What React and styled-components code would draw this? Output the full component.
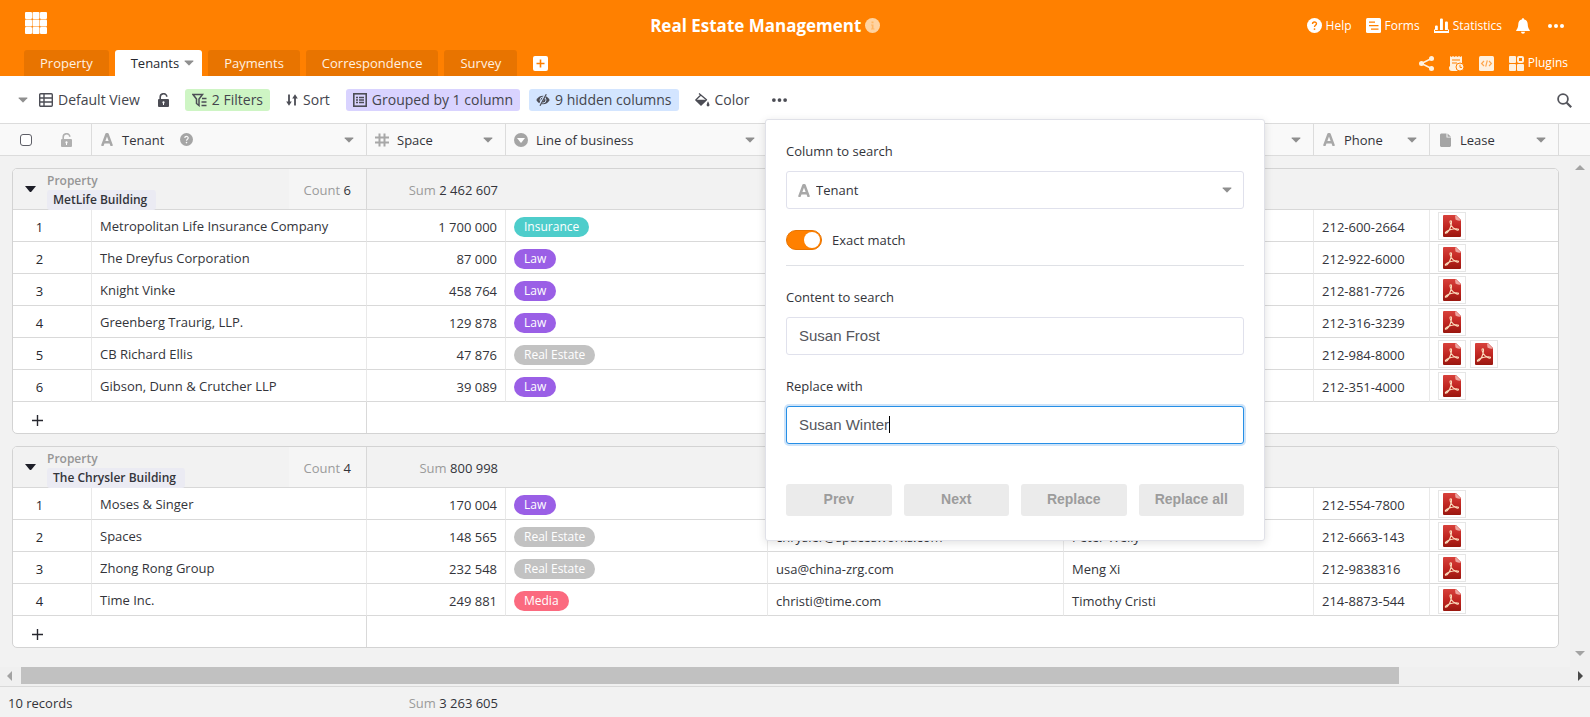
import React from "react";
import styled, { createGlobalStyle, css } from "styled-components";

const GlobalStyle = createGlobalStyle`
  *, *::before, *::after { box-sizing: border-box; }
  body {
    margin: 0;
    background: #f2f2f2;
    color: #33343a;
    font-family: "Open Sans", "Noto Sans", sans-serif;
    font-size: 13px;
    line-height: 20px;
  }
  button, select { font: inherit; color: inherit; }
  svg { display: block; flex: none; }
`;

/* ---------- icons ---------- */

const AppsIcon = () => (
  <svg width="22" height="22" viewBox="0 0 22 22" fill="#fff">
    {[0, 1, 2].map((r) =>
      [0, 1, 2].map((c) => (
        <rect key={`${r}${c}`} x={c * 7.5} y={r * 7.5} width="7" height="7" rx="1" />
      ))
    )}
  </svg>
);

const Caret = ({ color = "#8f8f8f", w = 10, h = 6 }) => (
  <svg width={w} height={h} viewBox="0 0 10 6" fill={color}>
    <path d="M0.9 0.5H9.1Q9.700 0.7 9.3 1.2L5.4 5.2Q5 5.600 4.600 5.2L0.700 1.200Q0.300 0.700 0.900 0.500Z" />
  </svg>
);

const HelpIcon = ({ size = 15, fill = "#fff", mark = "#ff8000" }) => (
  <svg width={size} height={size} viewBox="0 0 16 16">
    <circle cx="8" cy="8" r="8" fill={fill} />
    <path d="M5.900 6.300C5.900 3.500 10.200 3.600 10.100 6.200C10.100 7.700 8 7.700 8 9.500" fill="none" stroke={mark} strokeWidth="1.500" />
    <circle cx="8" cy="11.800" r="1" fill={mark} />
  </svg>
);

const InfoIcon = () => (
  <svg width="15" height="15" viewBox="0 0 15 15">
    <circle cx="7.500" cy="7.500" r="7.500" fill="#ffd3a1" />
    <path d="M6.500 3.500h2v1.700h-2zM6 6.500h2.500v4h1v1H6v-1h.8v-3H6z" fill="#ffb766" />
  </svg>
);

const FormsIcon = () => (
  <svg width="15" height="15" viewBox="0 0 15 15">
    <rect width="15" height="15" rx="1.500" fill="#fff" />
    <path d="M3 4.200h6M3 7.600h9.500M5 11.200h7.500" stroke="#ff8000" strokeWidth="1.300" />
  </svg>
);

const StatsIcon = () => (
  <svg width="15" height="15" viewBox="0 0 15 15" fill="#fff">
    <path d="M0 13h15v2H0zM1 8.500a1 1 0 0 1 1-1h.8a1 1 0 0 1 1 1V12H1zM6 1.500a1 1 0 0 1 1-1h.9a1 1 0 0 1 1 1V12H6zM11 4.500a1 1 0 0 1 1-1h.9a1 1 0 0 1 1 1V12H11z" />
    <path d="M0 11.500H1V13H0zM14 11.500H15V13H14z" />
  </svg>
);

const BellIcon = () => (
  <svg width="14" height="16" viewBox="0 0 14 16" fill="#fff">
    <path d="M7 0.300C7.700 0.300 8.200 0.800 8.200 1.500C10.500 2 11.600 3.800 11.700 6C11.800 9 12.400 10.400 13.800 12.200V13H0.200V12.200C1.600 10.400 2.200 9 2.300 6C2.400 3.800 3.500 2 5.800 1.500C5.800 0.800 6.300 0.300 7 0.300ZM5 13.700H9C8.900 15 8.100 15.700 7 15.700C5.900 15.700 5.100 15 5 13.700Z" />
  </svg>
);

const DotsIcon = ({ color, w = 16 }) => (
  <svg width={w} height="4" viewBox="0 0 16 4" fill={color}>
    <circle cx="2" cy="2" r="2" /><circle cx="8" cy="2" r="2" /><circle cx="14" cy="2" r="2" />
  </svg>
);

const ShareIcon = () => (
  <svg width="15" height="15" viewBox="0 0 15 15" fill="#fff1e0">
    <path d="M2.500 7.500L12.500 2.500M2.500 7.500L12.500 12.500" stroke="#fff1e0" strokeWidth="1.400" />
    <circle cx="2.500" cy="7.500" r="2.500" /><circle cx="12.500" cy="2.500" r="2.500" /><circle cx="12.500" cy="12.500" r="2.500" />
  </svg>
);

const ReportIcon = () => (
  <svg width="15" height="15" viewBox="0 0 15 15">
    <path d="M1 0L2.500 1L4 0L5.500 1L7 0L8.500 1L10 0L11.500 1L13 0V15H3Q0 15 0 12V10.500H1Z" fill="#fff1e0" />
    <path d="M3 4h8M3 7h5" stroke="#ff8000" strokeWidth="1.100" />
    <circle cx="11" cy="11" r="4" fill="#fff1e0" stroke="#ff8000" strokeWidth="1" />
    <path d="M11 8.800V11.400H13" fill="none" stroke="#ff8000" strokeWidth="1" />
  </svg>
);

const CodeIcon = () => (
  <svg width="15" height="15" viewBox="0 0 15 15">
    <rect width="15" height="15" rx="1.500" fill="#fff1e0" />
    <path d="M5 5L2.600 7.500L5 10M10 5L12.400 7.500L10 10M8.300 4.300L6.700 10.700" fill="none" stroke="#ffa64d" strokeWidth="1.200" />
  </svg>
);

const PluginsIcon = () => (
  <svg width="15" height="15" viewBox="0 0 15 15" fill="#fff1e0">
    <rect width="7" height="7" rx="1" /><rect y="8" width="7" height="7" rx="1" /><rect x="8" y="8" width="7" height="7" rx="1" />
    <rect x="9" y="1" width="5" height="5" rx="1" fill="none" stroke="#fff1e0" strokeWidth="2" />
  </svg>
);

const PlusBox = () => (
  <svg width="15" height="15" viewBox="0 0 15 15">
    <rect width="15" height="15" rx="2" fill="#fff" />
    <path d="M7.500 3.500V11.500M3.500 7.500H11.500" stroke="#ff8000" strokeWidth="1.600" />
  </svg>
);

const TableIcon = () => (
  <svg width="14" height="14" viewBox="0 0 14 14" fill="none" stroke="#4c4d55" strokeWidth="1.400">
    <rect x="0.700" y="0.700" width="12.600" height="12.600" rx="1" />
    <path d="M5 1V13M1 5H13M1 9H13" />
  </svg>
);

const LockIcon = ({ color = "#4c4d55" }) => (
  <svg width="11" height="14" viewBox="0 0 11 14">
    <rect x="0" y="6" width="11" height="8" rx="1" fill={color} />
    <path d="M2.200 6.500V4C2.200 -0.300 8.800 -0.300 8.800 3.800" fill="none" stroke={color} strokeWidth="1.600" />
    <circle cx="5.500" cy="9.400" r="1.100" fill="#fff" /><path d="M5.500 9.500V12" stroke="#fff" strokeWidth="1" />
  </svg>
);

const FilterIcon = () => (
  <svg width="15" height="14" viewBox="0 0 15 14" fill="none" stroke="#4c4d55" strokeWidth="1.500">
    <path d="M1 1.500H10.500L7 6V12.500L4.500 10.500V6Z" />
    <path d="M10 5.500H14.500M9.500 9H14.500M9.500 12.500H14.500" />
  </svg>
);

const SortIcon = () => (
  <svg width="12" height="12" viewBox="0 0 12 12" fill="#4c4d55">
    <path d="M2.100 0.500H3.900V7.500H5.800L3 11.700L0.200 7.500H2.100ZM8.100 11.500V4.500H6.200L9 0.300L11.800 4.500H9.900V11.500Z" />
  </svg>
);

const GroupIcon = () => (
  <svg width="14" height="14" viewBox="0 0 14 14" fill="none" stroke="#4c4d55" strokeWidth="1.600">
    <rect x="0.800" y="0.800" width="12.400" height="12.400" />
    <path d="M3 4.500H5M6 4.500H11M3 7H5M6 7H11M3 9.500H5M6 9.500H11" strokeWidth="1.400" />
  </svg>
);

const HiddenIcon = () => (
  <svg width="14" height="12" viewBox="0 0 14 12">
    <path d="M0.300 6C3 0.300 11 0.300 13.700 6C11 11.700 3 11.700 0.300 6Z" fill="#4c4d55" />
    <circle cx="7" cy="6" r="3" fill="none" stroke="#d3e5ff" strokeWidth="0.900" />
    <path d="M10 0L3 12" stroke="#d3e5ff" strokeWidth="2.400" />
    <path d="M10.300 0.200L4 11.800" stroke="#4c4d55" strokeWidth="1.200" />
  </svg>
);

const ColorIcon = () => (
  <svg width="15" height="14" viewBox="0 0 15 14">
    <path d="M4 0.500L11.500 6.700L6 12L0.800 7L5.600 2.200" fill="none" stroke="#4c4d55" strokeWidth="1.300" strokeLinejoin="round" />
    <path d="M1 6.800H11.600L6 12.400Z" fill="#4c4d55" />
    <path d="M13 8.300Q16 13.300 13 13.400Q10.200 13.300 13 8.300Z" fill="#4c4d55" />
  </svg>
);

const SearchIcon = () => (
  <svg width="15" height="15" viewBox="0 0 15 15" fill="none" stroke="#54555c">
    <circle cx="6" cy="6" r="4.900" strokeWidth="1.800" />
    <path d="M9.700 9.700L14.200 14.200" strokeWidth="2.200" />
  </svg>
);

const TextTypeIcon = () => (
  <svg width="12" height="13" viewBox="0 0 12 13" fill="none" stroke="#a8a8a8" strokeWidth="2.500" strokeLinejoin="round">
    <path d="M1.200 13L5.500 1.300H6.500L10.800 13M3 9.200H9" />
  </svg>
);

const NumberTypeIcon = () => (
  <svg width="14" height="14" viewBox="0 0 14 14" fill="none" stroke="#a8a8a8" strokeWidth="2">
    <path d="M4.500 0.500V13.500M9.500 0.500V13.500M0 4.500H14M0 9.500H14" />
  </svg>
);

const SelectTypeIcon = () => (
  <svg width="14" height="14" viewBox="0 0 14 14">
    <circle cx="7" cy="7" r="7" fill="#a5a5a5" />
    <path d="M3 5H11L7 10Z" fill="#fff" />
  </svg>
);

const FileTypeIcon = () => (
  <svg width="11" height="14" viewBox="0 0 11 14" fill="#a5a5a5">
    <path d="M1 0.500H6.500V4.500H11V13L10 14H1L0 13V1.500ZM7.500 0.500L11 3.800H7.500Z" />
  </svg>
);

const PdfIcon = () => (
  <svg width="18" height="22" viewBox="0 0 18 22">
    <defs>
      <linearGradient id="pdfRed" x1="0" y1="0" x2="0" y2="1">
        <stop offset="0" stopColor="#d8413b" />
        <stop offset="0.550" stopColor="#bf2520" />
        <stop offset="1" stopColor="#99170f" />
      </linearGradient>
    </defs>
    <path d="M1 0H13L18 5V21Q18 22 17 22H1Q0 22 0 21V1Q0 0 1 0Z" fill="url(#pdfRed)" />
    <path d="M12 0.500H13L18 5.500Q14 6 12.500 4.500Z" fill="#eea6a0" />
    <path d="M7.300 6C9 5 8.600 8 8 10.500C7 14.500 4.500 18.500 2.500 18.300C1.500 17.500 5 15 9 14.200C12 13.500 15.800 13.600 15.500 14.800C14.800 16 10 13.500 8.300 10.500C7.400 8.800 6.600 6.600 7.300 6Z" fill="none" stroke="#fbdcbc" strokeWidth="1.100" />
  </svg>
);

const GroupTriangle = () => (
  <svg width="11" height="6" viewBox="0 0 11 6" fill="#1d1e28">
    <path d="M0 0H11L6.500 5.500Q5.500 6.500 4.500 5.500Z" />
  </svg>
);

const AddIcon = () => (
  <svg width="11" height="11" viewBox="0 0 11 11" stroke="#26272e" strokeWidth="1.400">
    <path d="M5.500 0V11M0 5.500H11" />
  </svg>
);

const Arrow = ({ dir, color = "#a3a3a3" }) => {
  const shapes = { up: "M5 2L10 7H0Z", down: "M0 3H10L5 8Z", left: "M7 0V10L2 5Z", right: "M3 0V10L8 5Z" };
  return (
    <svg width="10" height="10" viewBox="0 0 10 10" fill={color}><path d={shapes[dir]} /></svg>
  );
};

/* ---------- layout ---------- */

const Page = styled.div`
  position: relative;
  display: flex;
  flex-direction: column;
  min-height: 100vh;
  overflow: hidden;
`;

const Header = styled.header`
  background: #ff8000;
  color: #fff;
`;

const TopRow = styled.div`
  display: flex;
  align-items: center;
  height: 50px;
  padding: 1px 26px 0 25px;
`;

const PlainButton = styled.button`
  display: flex;
  align-items: center;
  gap: 4px;
  padding: 0;
  border: 0;
  background: none;
  cursor: pointer;
  white-space: nowrap;
`;

const AppsButton = styled(PlainButton)`
  padding-bottom: 5px;
`;

const MoreButton = styled(PlainButton)`
  padding-left: 4px;
`;

const Title = styled.h1`
  display: flex;
  flex: 1;
  align-items: center;
  justify-content: center;
  gap: 4px;
  margin: 0;
  padding-left: 177px;
  font-size: 17px;
  font-weight: 700;
  white-space: nowrap;
`;

const Nav = styled.nav`
  display: flex;
  align-items: center;
  gap: ${(p) => p.$gap}px;
  font-size: 12px;
`;

const TabRow = styled.div`
  display: flex;
  justify-content: space-between;
  height: 26px;
  padding: 0 22px 0 24px;
`;

const Tabs = styled.div`
  display: flex;
  align-items: center;
  gap: 6px;
`;

const Tab = styled.button`
  display: flex;
  align-items: center;
  gap: 5px;
  height: 26px;
  padding: ${(p) => (p.$active ? "0 8px 0 16px" : "0 16px")};
  border: 0;
  border-radius: 3px 3px 0 0;
  background: ${(p) => (p.$active ? "#fff" : "#e87400")};
  color: ${(p) => (p.$active ? "#26272e" : "#fff1e0")};
  cursor: pointer;
`;

const AddTab = styled(PlainButton)`
  margin-left: 10px;
`;

const Toolbar = styled.div`
  display: flex;
  align-items: center;
  gap: 9px;
  height: 47px;
  padding: 1px 18px 0;
  background: #fff;
  color: #44454d;
`;

const ViewTools = styled.div`
  display: flex;
  align-items: center;
  gap: 4px;
`;

const ToolButton = styled.button`
  display: flex;
  align-items: center;
  gap: 5px;
  height: 22px;
  padding: 0 7px;
  border: 0;
  border-radius: 3px;
  background: ${(p) => p.$bg || "none"};
  font-size: 14px;
  cursor: pointer;
  white-space: nowrap;
`;

const SearchButton = styled(PlainButton)`
  margin-left: auto;
`;

/* ---------- grid ---------- */

const GridTable = styled.table`
  table-layout: fixed;
  border-collapse: separate;
  border-spacing: 0;
  width: 100%;
`;

const HeadCell = styled.th`
  height: 33px;
  padding: 0;
  border: solid #dcdcdc;
  border-width: 1px 1px 1px 0;
  background: #f9f9f9;
  font-weight: 400;
  text-align: left;
  &:last-child { border-right: 0; }
`;

const HeadContent = styled.div`
  display: flex;
  align-items: center;
  gap: 8px;
  padding: 0 12px 0 8px;
`;

const IconSlot = styled.span`
  display: grid;
  place-items: center;
  width: 14px;
`;

const HeadHint = styled.span`
  margin-left: 8px;
`;

const Spacer = styled.span`
  flex: 1;
`;

const SelectAll = styled.div`
  display: flex;
  align-items: center;
  justify-content: space-between;
  padding: 0 19px 0 20px;
`;

const HeadCheckbox = styled.input`
  appearance: none;
  width: 12px;
  height: 12px;
  margin: 0;
  border: 1px solid #5d5e66;
  border-radius: 3px;
  background: #fff;
`;

const Body = styled.main`
  display: flex;
  flex: 1;
`;

const Groups = styled.div`
  flex: 1;
  display: flex;
  flex-direction: column;
  align-items: flex-start;
  gap: 12px;
  min-width: 0;
  padding: 12px 0 18px 12px;
`;

const GroupBox = styled.section`
  width: 1547px;
  overflow: hidden;
  border: 1px solid #d3d3d3;
  border-radius: 5px;
  background: #fff;
`;

const GroupCell = styled.td`
  height: 41px;
  padding: 0;
  border-bottom: 1px solid #d8d8d8;
  border-right: ${(p) => (p.$edge ? "1px solid #d8d8d8" : "0")};
  background: #f2f2f2;
  text-align: right;
`;

const GroupHead = styled.div`
  display: flex;
  align-items: stretch;
  height: 40px;
`;

const GroupName = styled.div`
  display: flex;
  flex: 1;
  align-items: center;
  gap: 11px;
  padding-left: 12px;
`;

const GroupLabels = styled.div`
  display: flex;
  flex-direction: column;
  align-items: flex-start;
  padding-top: 3px;
`;

const GroupField = styled.span`
  color: #969696;
  font-size: 12px;
  font-weight: 600;
  line-height: 18px;
`;

const GroupValue = styled.span`
  padding: 0 9px 0 6px;
  border-radius: 3px;
  background: #ebebf3;
  color: #33343a;
  font-size: 12px;
  font-weight: 600;
`;

const Aggregate = styled.div`
  padding: 2px 8px 0 0;
`;

const CountBox = styled.div`
  display: flex;
  align-items: center;
  padding: 2px 15px 0;
  background: #f5f5f5;
`;

const Muted = styled.span`
  color: #9b9b9b;
`;

const Cell = styled.td`
  height: ${(p) => (p.$add ? 31 : 32)}px;
  padding: 0 8px;
  border-bottom: ${(p) => (p.$add ? "0" : "1px solid #d9d9d9")};
  border-right: 1px solid ${(p) => (p.$add ? "#d9d9d9" : "#e9e9e9")};
  text-align: ${(p) => p.$align || "left"};
  white-space: nowrap;
  &:last-child { border-right: 0; }
`;

const ValueCell = styled(Cell)`
  padding-top: 2px;
`;

const IndexCell = styled(Cell)`
  padding: 2px 25px 0 0;
  color: #26272e;
`;

const Tag = styled.span`
  display: block;
  width: fit-content;
  padding: 0 10px;
  border-radius: 10px;
  background: ${(p) => p.$color};
  color: #fff;
  font-size: 12px;
  font-weight: 500;
`;

const Files = styled.div`
  display: flex;
  gap: 4px;
`;

const FileTile = styled.a`
  display: grid;
  place-items: center;
  width: 28px;
  height: 28px;
  border: 1px solid #e6e6e6;
`;

const AddRow = styled(PlainButton)`
  padding: 6px 0 0 11px;
`;

const VScroll = styled.div`
  display: flex;
  flex-direction: column;
  align-items: center;
  justify-content: space-between;
  width: 20px;
  padding: 7px 0 9px;
  background: #f0f0f0;
`;

const HScroll = styled.div`
  display: flex;
  align-items: center;
  gap: 6px;
  height: 19px;
  padding: 0 5px 2px;
  background: #f0f0f0;
`;

const Track = styled.div`
  flex: 1;
  height: 17px;
`;

const Thumb = styled.div`
  width: 89%;
  height: 17px;
  background: #c1c1c1;
`;

const Footer = styled.footer`
  display: flex;
  align-items: center;
  height: 31px;
  padding: 2px 8px 0;
  border-top: 1px solid #d9d9d9;
`;

const Records = styled.span`
  flex: 0 0 359px;
`;

const Total = styled.span`
  flex: 0 0 131px;
  text-align: right;
`;

/* ---------- search panel ---------- */

const Panel = styled.form`
  position: absolute;
  top: 119px;
  right: 325px;
  width: 500px;
  padding: 21px 20px 24px;
  border: 1px solid #e0e1e8;
  border-radius: 3px;
  background: #fff;
  box-shadow: 0 2px 8px rgba(0, 0, 0, 0.12);
`;

const Label = styled.label`
  display: block;
  padding-bottom: 10px;
`;

const fieldBox = css`
  width: 100%;
  height: 38px;
  border: 1px solid #e0e1ec;
  border-radius: 3px;
  background: #fff;
`;

const SelectWrap = styled.div`
  display: grid;
  grid-template-columns: 12px 1fr 10px;
  align-items: center;
  > svg { grid-row: 1; z-index: 1; pointer-events: none; }
  > svg:first-child { grid-column: 1; margin-left: 12px; }
  > svg:last-child { grid-column: 3; margin-left: -12px; }
`;

const Select = styled.select`
  ${fieldBox}
  grid-row: 1;
  grid-column: 1 / -1;
  appearance: none;
  padding: 0 29px;
`;

const ToggleRow = styled.label`
  display: flex;
  align-items: center;
  gap: 10px;
  margin-top: 21px;
  padding-bottom: 15px;
  border-bottom: 1px solid #dfe1e6;
`;

const Toggle = styled.input`
  appearance: none;
  display: flex;
  justify-content: flex-end;
  width: 36px;
  height: 20px;
  margin: 0;
  padding: 1px;
  border: 1px solid #e87400;
  border-radius: 10px;
  background: #ff8000;
  &::before {
    content: "";
    width: 16px;
    height: 16px;
    border-radius: 50%;
    background: #fff;
  }
`;

const Field = styled.div`
  margin-top: 21px;
`;

const InputBox = styled.div`
  ${fieldBox}
  display: flex;
  align-items: center;
  padding: 0 12px 2px;
  ${(p) =>
    p.$focused &&
    css`
      border-color: #268fe6;
      box-shadow: 0 0 0 2px #cfe4f9;
    `}
`;

const TextInput = styled.input`
  field-sizing: content;
  padding: 0;
  border: 0;
  outline: 0;
  background: none;
  color: #55565c;
  caret-color: transparent;
  font-family: "Liberation Sans", Arial, sans-serif;
  font-size: 15px;
`;

const TextCursor = styled.span`
  width: 1px;
  height: 17px;
  background: #000;
`;

const Actions = styled.div`
  display: grid;
  grid-template-columns: repeat(4, 1fr);
  gap: 12px;
  margin-top: 40px;
`;

const ActionButton = styled.button`
  height: 32px;
  padding: 0 0 2px;
  border: 0;
  border-radius: 3px;
  background: #ebebeb;
  color: #9c9c9c;
  font-family: "Liberation Sans", Arial, sans-serif;
  font-size: 14px;
  font-weight: 700;
`;

/* ---------- data ---------- */

const tagColors = {
  Insurance: "#4ecdcb",
  Law: "#9a5fe6",
  "Real Estate": "#c2c2c2",
  Media: "#fb6a7f",
};

const groups = [
  {
    name: "MetLife Building",
    sum: "2 462 607",
    rows: [
      ["Metropolitan Life Insurance Company", "1 700 000", "Insurance", "", "", "212-600-2664", 1],
      ["The Dreyfus Corporation", "87 000", "Law", "", "", "212-922-6000", 1],
      ["Knight Vinke", "458 764", "Law", "", "", "212-881-7726", 1],
      ["Greenberg Traurig, LLP.", "129 878", "Law", "", "", "212-316-3239", 1],
      ["CB Richard Ellis", "47 876", "Real Estate", "", "", "212-984-8000", 2],
      ["Gibson, Dunn & Crutcher LLP", "39 089", "Law", "", "", "212-351-4000", 1],
    ],
  },
  {
    name: "The Chrysler Building",
    sum: "800 998",
    rows: [
      ["Moses & Singer", "170 004", "Law", "", "", "212-554-7800", 1],
      ["Spaces", "148 565", "Real Estate", "chrysler@spacesworks.com", "Peter Welly", "212-6663-143", 1],
      ["Zhong Rong Group", "232 548", "Real Estate", "usa@china-zrg.com", "Meng Xi", "212-9838316", 1],
      ["Time Inc.", "249 881", "Media", "christi@time.com", "Timothy Cristi", "214-8873-544", 1],
    ],
  },
];

const columnWidths = [275, 139, 262, 296, 250, 116];

const Columns = ({ first, last, filler }) => (
  <colgroup>
    <col width={first} />
    {columnWidths.map((w, i) => <col key={i} width={w} />)}
    <col width={last} />
    {filler && <col />}
  </colgroup>
);

const HeadColumn = ({ icon, name, children }) => (
  <HeadCell scope="col">
    <HeadContent>
      <IconSlot>{icon}</IconSlot>
      {name}
      {children}
      <Spacer />
      <Caret />
    </HeadContent>
  </HeadCell>
);

const Group = ({ name, sum, rows }) => (
  <GroupBox>
    <GridTable>
      <Columns first={79} last={128} />
      <tbody>
        <tr>
          <GroupCell colSpan={2} $edge>
            <GroupHead>
              <GroupName>
                <GroupTriangle />
                <GroupLabels>
                  <GroupField>Property</GroupField>
                  <GroupValue>{name}</GroupValue>
                </GroupLabels>
              </GroupName>
              <CountBox><span><Muted>Count</Muted> {rows.length}</span></CountBox>
            </GroupHead>
          </GroupCell>
          <GroupCell><Aggregate><Muted>Sum</Muted> {sum}</Aggregate></GroupCell>
          <GroupCell colSpan={5} />
        </tr>
        {rows.map(([tenant, space, business, email, contact, phone, files], i) => (
          <tr key={tenant}>
            <IndexCell $align="center">{i + 1}</IndexCell>
            <Cell>{tenant}</Cell>
            <ValueCell $align="right">{space}</ValueCell>
            <ValueCell><Tag $color={tagColors[business]}>{business}</Tag></ValueCell>
            <ValueCell>{email}</ValueCell>
            <ValueCell>{contact}</ValueCell>
            <ValueCell>{phone}</ValueCell>
            <Cell>
              <Files>
                {Array.from({ length: files }, (_, f) => (
                  <FileTile key={f} href="#lease" aria-label="Lease PDF"><PdfIcon /></FileTile>
                ))}
              </Files>
            </Cell>
          </tr>
        ))}
        <tr>
          <Cell $add colSpan={2}><AddRow type="button" aria-label="Add row"><AddIcon /></AddRow></Cell>
          <Cell $add colSpan={6} />
        </tr>
      </tbody>
    </GridTable>
  </GroupBox>
);

export default function App() {
  return (
    <Page>
      <GlobalStyle />
      <Header>
        <TopRow>
          <AppsButton aria-label="Apps"><AppsIcon /></AppsButton>
          <Title>Real Estate Management <InfoIcon /></Title>
          <Nav $gap={14}>
            <PlainButton><HelpIcon />Help</PlainButton>
            <PlainButton><FormsIcon />Forms</PlainButton>
            <PlainButton><StatsIcon />Statistics</PlainButton>
            <PlainButton aria-label="Notifications"><BellIcon /></PlainButton>
            <MoreButton aria-label="More"><DotsIcon color="#fff" /></MoreButton>
          </Nav>
        </TopRow>
        <TabRow>
          <Tabs>
            <Tab>Property</Tab>
            <Tab $active>Tenants <Caret /></Tab>
            <Tab>Payments</Tab>
            <Tab>Correspondence</Tab>
            <Tab>Survey</Tab>
            <AddTab aria-label="Add table"><PlusBox /></AddTab>
          </Tabs>
          <Nav $gap={15}>
            <PlainButton aria-label="Share"><ShareIcon /></PlainButton>
            <PlainButton aria-label="Activity"><ReportIcon /></PlainButton>
            <PlainButton aria-label="Scripts"><CodeIcon /></PlainButton>
            <PlainButton><PluginsIcon />Plugins</PlainButton>
          </Nav>
        </TabRow>
      </Header>

      <Toolbar>
        <ViewTools>
          <PlainButton aria-label="Views"><Caret /></PlainButton>
          <ToolButton><TableIcon />Default View</ToolButton>
          <ToolButton aria-label="Lock view"><LockIcon /></ToolButton>
        </ViewTools>
        <ToolButton $bg="#cef5c4"><FilterIcon />2 Filters</ToolButton>
        <ToolButton><SortIcon />Sort</ToolButton>
        <ToolButton $bg="#d9d3ff"><GroupIcon />Grouped by 1 column</ToolButton>
        <ToolButton $bg="#d3e5ff"><HiddenIcon />9 hidden columns</ToolButton>
        <ToolButton><ColorIcon />Color</ToolButton>
        <ToolButton aria-label="More tools"><DotsIcon color="#4c4d55" w={15} /></ToolButton>
        <SearchButton aria-label="Search"><SearchIcon /></SearchButton>
      </Toolbar>

      <GridTable>
        <Columns first={92} last={129} filler />
        <thead>
          <tr>
            <HeadCell scope="col">
              <SelectAll>
                <HeadCheckbox type="checkbox" aria-label="Select all rows" />
                <LockIcon color="#b0b0b0" />
              </SelectAll>
            </HeadCell>
            <HeadColumn icon={<TextTypeIcon />} name="Tenant">
              <HeadHint><HelpIcon size={13} fill="#a5a5a5" mark="#f9f9f9" /></HeadHint>
            </HeadColumn>
            <HeadColumn icon={<NumberTypeIcon />} name="Space" />
            <HeadColumn icon={<SelectTypeIcon />} name="Line of business" />
            <HeadColumn icon={<TextTypeIcon />} />
            <HeadColumn icon={<TextTypeIcon />} />
            <HeadColumn icon={<TextTypeIcon />} name="Phone" />
            <HeadColumn icon={<FileTypeIcon />} name="Lease" />
            <HeadCell />
          </tr>
        </thead>
      </GridTable>

      <Body>
        <Groups>
          {groups.map((g) => <Group key={g.name} {...g} />)}
        </Groups>
        <VScroll><Arrow dir="up" /><Arrow dir="down" /></VScroll>
      </Body>
      <HScroll>
        <Arrow dir="left" />
        <Track><Thumb /></Track>
        <Arrow dir="right" color="#4a4a4a" />
      </HScroll>
      <Footer>
        <Records>10 records</Records>
        <Total><Muted>Sum</Muted> 3 263 605</Total>
      </Footer>

      <Panel>
        <Label htmlFor="column">Column to search</Label>
        <SelectWrap>
          <TextTypeIcon />
          <Select id="column" defaultValue="Tenant">
            <option>Tenant</option>
          </Select>
          <Caret />
        </SelectWrap>
        <ToggleRow>
          <Toggle type="checkbox" role="switch" defaultChecked />
          Exact match
        </ToggleRow>
        <Field>
          <Label htmlFor="search">Content to search</Label>
          <InputBox><TextInput id="search" defaultValue="Susan Frost" /></InputBox>
        </Field>
        <Field>
          <Label htmlFor="replace">Replace with</Label>
          <InputBox $focused>
            <TextInput id="replace" defaultValue="Susan Winter" />
            <TextCursor />
          </InputBox>
        </Field>
        <Actions>
          <ActionButton type="button">Prev</ActionButton>
          <ActionButton type="button">Next</ActionButton>
          <ActionButton type="button">Replace</ActionButton>
          <ActionButton type="button">Replace all</ActionButton>
        </Actions>
      </Panel>
    </Page>
  );
}
